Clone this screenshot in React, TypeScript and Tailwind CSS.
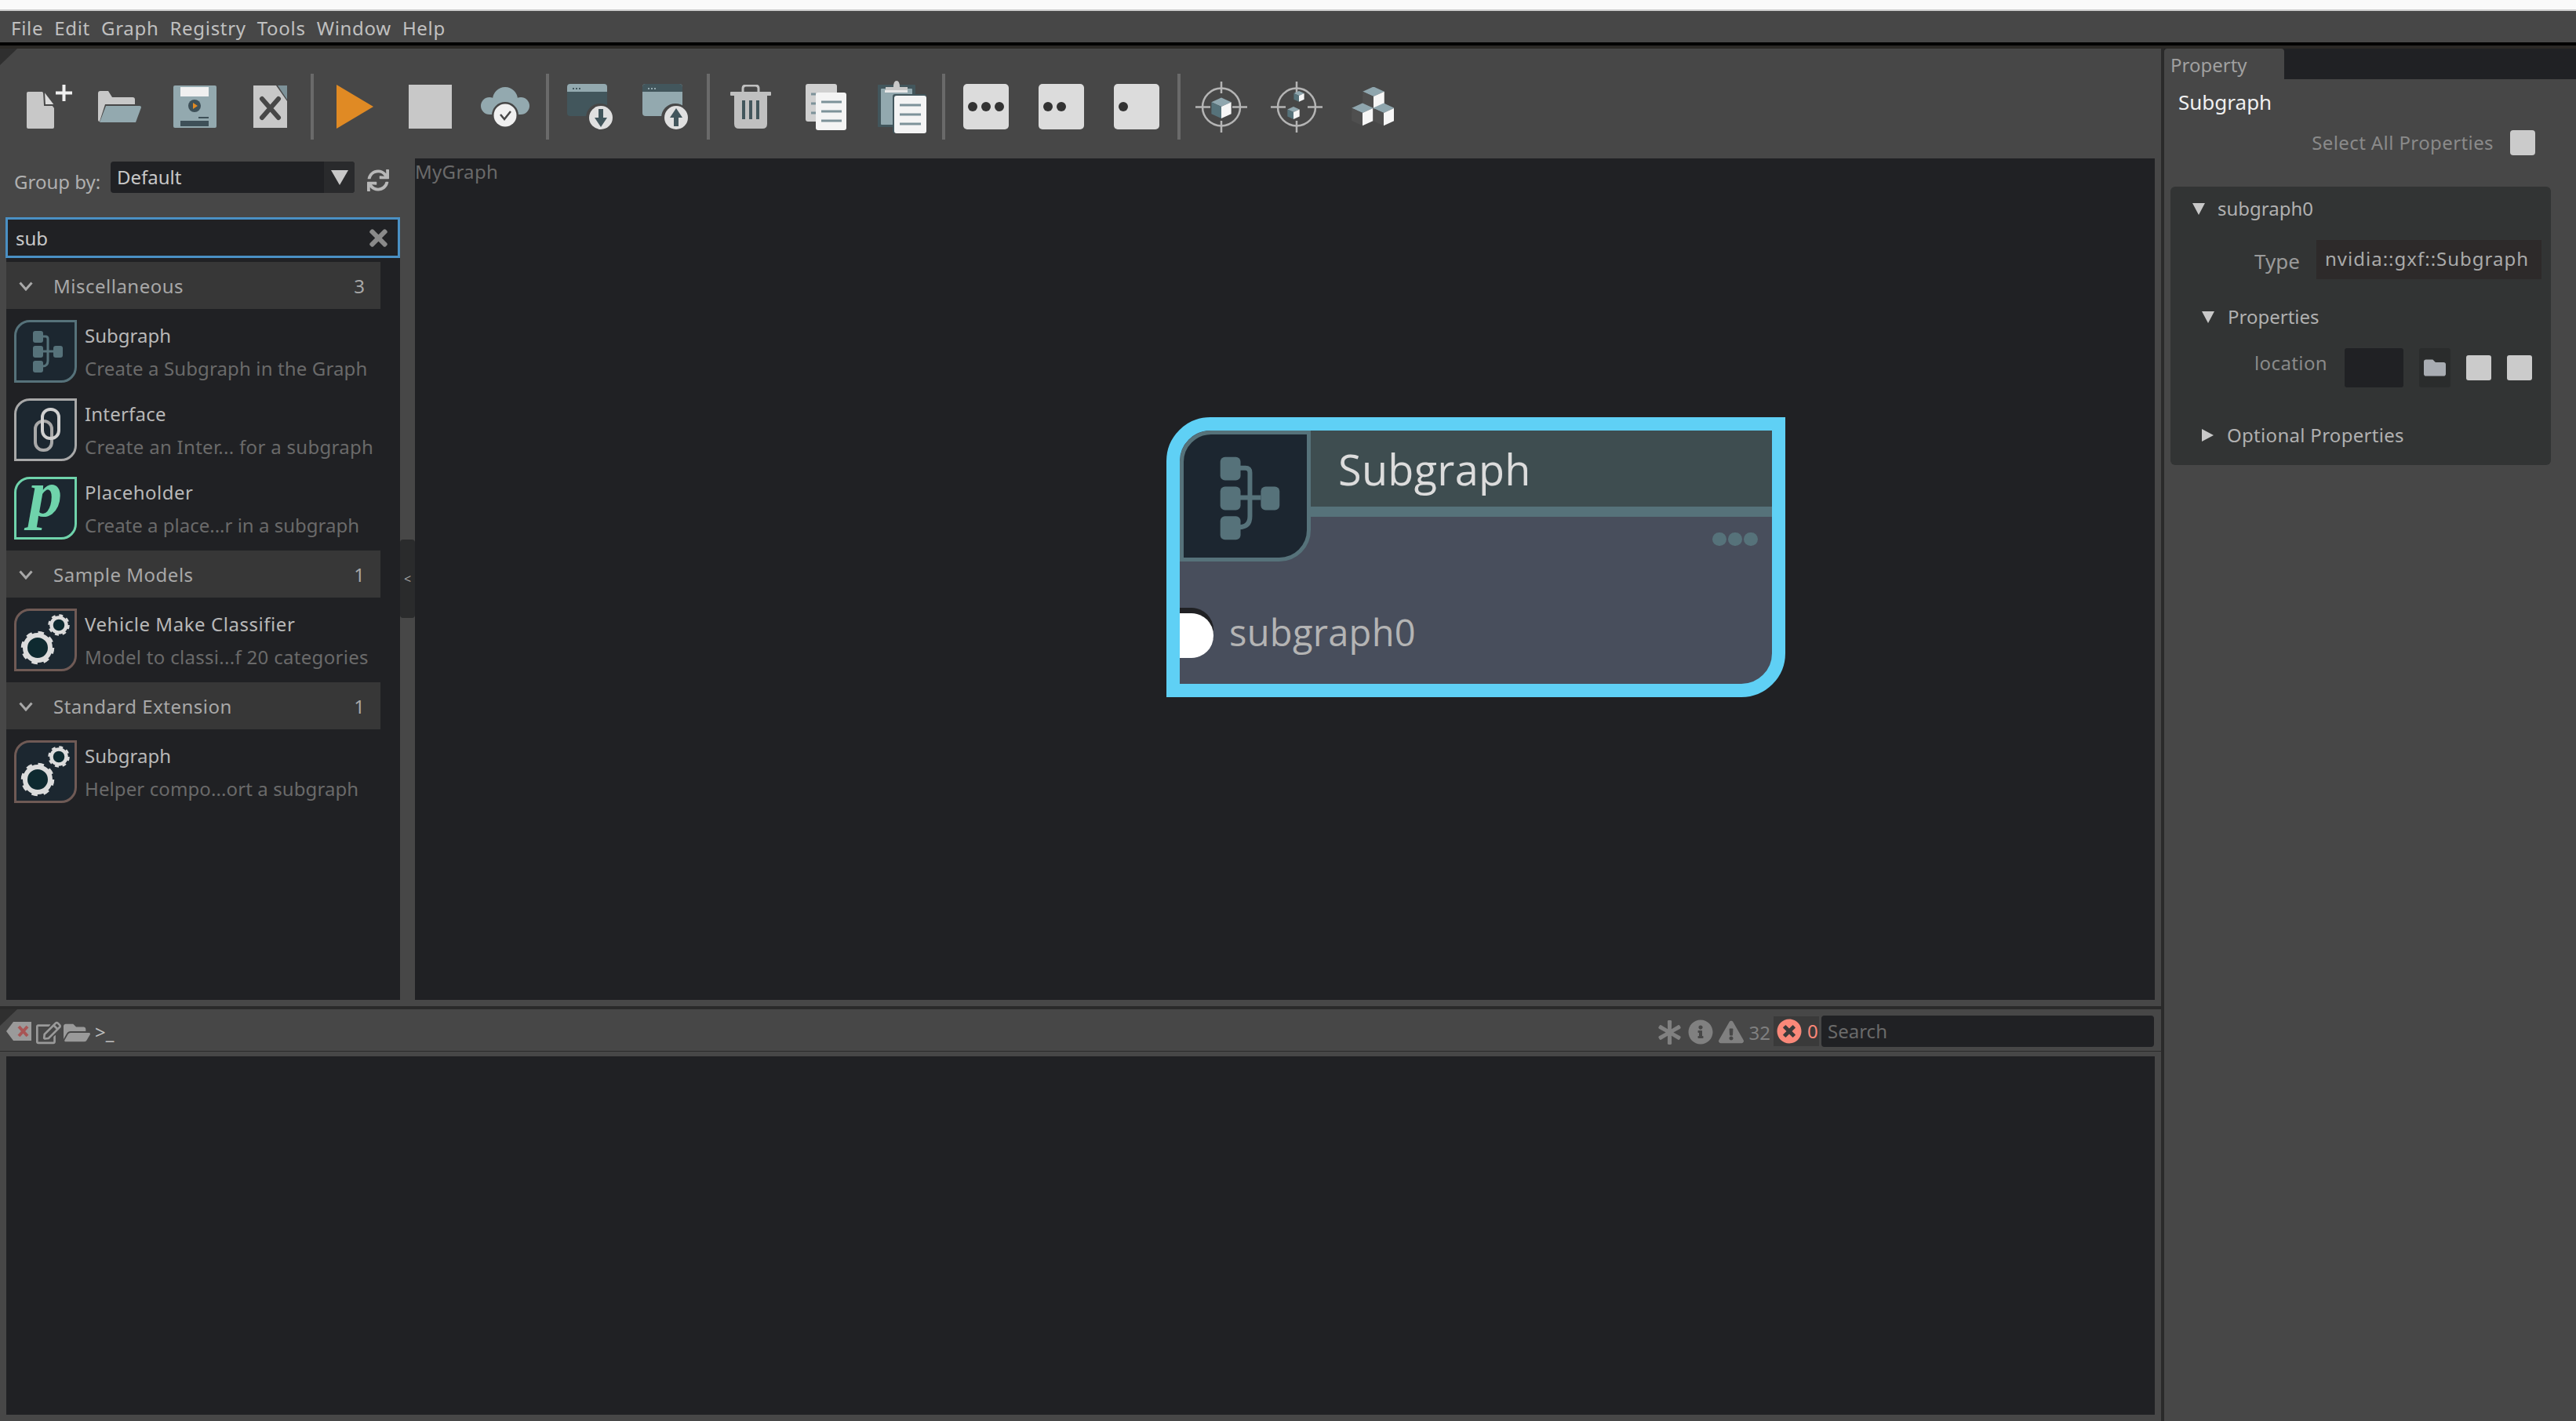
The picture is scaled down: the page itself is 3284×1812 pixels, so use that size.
import { FaSync, FaTimes, FaAsterisk, FaInfoCircle, FaExclamationTriangle, FaTimesCircle, FaRegEdit, FaFolderOpen, FaFolder } from 'react-icons/fa';

const MENUS = ['File', 'Edit', 'Graph', 'Registry', 'Tools', 'Window', 'Help'];

function NewIcon() {
  return (
    <svg width="58" height="56" viewBox="0 0 58 56" className="ml-[34px]">
      <path d="M0 11Q0 9 2 9H20L35 30V54Q35 56 33 56H2Q0 56 0 54Z" fill="#c8c8c8" />
      <path d="M22 9L23 26H35" fill="#dcdcdc" stroke="#474747" strokeWidth="2" />
      <path d="M37 10.5H58M47.5 0V21" stroke="#f0f0f0" strokeWidth="4" />
    </svg>
  );
}

function OpenIcon() {
  return (
    <svg width="55" height="40" viewBox="0 0 55 40" className="ml-[33px]">
      <path d="M0 3Q0 0 3 0H13L18 8H44Q47 8 47 11V17H9L2 39Q0 39 0 37Z" fill="#c8c8c8" />
      <path d="M10 19H53Q55 19 55 21L48 40H2Z" fill="#93a9af" />
    </svg>
  );
}

function SaveIcon() {
  return (
    <svg width="55" height="54" viewBox="0 0 55 54" className="ml-[41px]">
      <rect width="55" height="54" rx="2" fill="#93a9af" />
      <rect x="9" y="2" width="36" height="12" fill="#f0f0f0" />
      <ellipse cx="27" cy="26" rx="8" ry="8" fill="#3e5058" />
      <path d="M25 22V30L31 26Z" fill="#e08a24" />
      <rect x="32" y="40" width="13" height="2" fill="#3e5058" />
      <rect x="9" y="45" width="36" height="7" fill="#3e5058" />
    </svg>
  );
}

function CloseIcon() {
  return (
    <svg width="43" height="54" viewBox="0 0 43 54" className="ml-[47px]">
      <path d="M0 0H29L43 20V54H0Z" fill="#c8c8c8" />
      <path d="M31 0H43V18Z" fill="#7d9299" />
      <path d="M11 17L32 41M32 17L11 41" stroke="#474747" strokeWidth="6" strokeLinecap="round" />
    </svg>
  );
}

function Sep() {
  return <div className="h-[84px] w-[4px] bg-[#6a6a6a] self-center" />;
}

function CloudIcon() {
  return (
    <svg width="62" height="51" viewBox="0 0 62 51" className="ml-[37px]">
      <circle cx="31" cy="16" r="16" fill="#93a9af" />
      <circle cx="11" cy="24" r="11" fill="#93a9af" />
      <circle cx="51" cy="24" r="11" fill="#93a9af" />
      <rect x="11" y="20" width="40" height="15" fill="#93a9af" />
      <circle cx="31" cy="36" r="17" fill="#474747" />
      <circle cx="31" cy="36" r="14.5" fill="#f0f0f0" />
      <path d="M25 35L30 41L38 31" fill="none" stroke="#474747" strokeWidth="2.5" />
    </svg>
  );
}

function WindowIcon({ up, className }: { up?: boolean; className: string }) {
  const bar = up ? '#42565c' : '#93a9af';
  const body = up ? '#93a9af' : '#42565c';
  return (
    <svg width="59" height="58" viewBox="0 0 59 58" className={className}>
      <rect width="51" height="41" rx="4" fill={body} />
      <path d="M0 10V4Q0 0 4 0H47Q51 0 51 4V10Z" fill={bar} />
      <path d="M7 6H9M11 6H13M15 6H17" stroke={up ? '#93a9af' : '#42565c'} strokeWidth="2" />
      <circle cx="42" cy="43" r="18" fill="#474747" />
      <circle cx="43" cy="43" r="15" fill="#e0e0e0" />
      {up ? (
        <path d="M43 31L51 43H46V54H40V43H35Z" fill="#42565c" />
      ) : (
        <path d="M43 55L51 43H46V32H40V43H35Z" fill="#42565c" />
      )}
    </svg>
  );
}

function TrashIcon() {
  return (
    <svg width="52" height="56" viewBox="0 0 52 56" className="ml-[26px]">
      <path d="M16 10V5Q16 1 20 1H32Q36 1 36 5V10" fill="none" stroke="#c0c0c0" strokeWidth="3" />
      <rect x="0" y="9" width="52" height="5" rx="1" fill="#c0c0c0" />
      <path d="M5 14H47V50Q47 56 41 56H11Q5 56 5 50Z" fill="#c0c0c0" />
      <path d="M15 20H19V44H15ZM24 20H28V44H24ZM33 20H37V44H33Z" fill="#42565c" />
    </svg>
  );
}

function CopyIcon() {
  return (
    <svg width="52" height="59" viewBox="0 0 52 59" className="ml-[44px]">
      <rect width="40" height="48" rx="3" fill="#d0d0d0" />
      <path d="M7 13H13M7 25H13M7 37H13" stroke="#7d9299" strokeWidth="3" />
      <rect x="13" y="11" width="39" height="48" rx="3" fill="#f4f4f4" />
      <path d="M20 23H46M20 35H46M20 47H46" stroke="#7d9299" strokeWidth="3" />
    </svg>
  );
}

function PasteIcon() {
  return (
    <svg width="62" height="67" viewBox="0 0 62 67" className="ml-[40px]">
      <rect y="5" width="48" height="54" rx="1" fill="#42565c" />
      <rect x="4" y="10" width="40" height="46" rx="1" fill="#93a9af" />
      <path d="M10 15V8H20Q20 0 24 0Q28 0 28 8H38V15Z" fill="#c8c8c8" />
      <rect x="9" y="12" width="29" height="3" fill="#e8e8e8" />
      <rect x="19" y="17" width="43" height="50" rx="3" fill="#42565c" />
      <rect x="21" y="19" width="41" height="48" rx="3" fill="#f4f4f4" />
      <path d="M28 31H55M28 43H55M28 55H55" stroke="#7d9299" strokeWidth="3" />
    </svg>
  );
}

function DotsIcon({ n, className }: { n: number; className: string }) {
  return (
    <svg width="58" height="58" viewBox="0 0 58 58" className={className}>
      <rect width="58" height="58" rx="5" fill="#dcdcdc" />
      {[12, 29, 46].slice(0, n).map((cx) => (
        <circle key={cx} cx={cx} cy="29" r="6" fill="#333333" />
      ))}
    </svg>
  );
}

function Cube({ x, y, s, left = '#56727a' }: { x: number; y: number; s: number; left?: string }) {
  return (
    <g transform={`translate(${x} ${y}) scale(${s})`}>
      <path d="M0 -10L11 -5L0 0L-11 -5Z" fill="#8fa6ae" />
      <path d="M-11 -5L0 0V13L-11 8Z" fill={left} />
      <path d="M11 -5L0 0V13L11 8Z" fill="#f6f6f6" />
    </g>
  );
}

function TargetIcon({ children, className }: { children: React.ReactNode; className: string }) {
  return (
    <svg width="66" height="65" viewBox="0 0 66 65" className={className}>
      <circle cx="33" cy="32.5" r="24" fill="none" stroke="#b4b4b4" strokeWidth="2.5" />
      <path d="M0 32.5H19M47 32.5H66M33 0V15M33 50V65" stroke="#b4b4b4" strokeWidth="2.5" />
      {children}
    </svg>
  );
}

function BlocksIcon() {
  return (
    <svg width="54" height="50" viewBox="0 0 54 50" className="ml-[37px]">
      <Cube x={28} y={12} s={1.25} left="#4f4f4f" />
      <Cube x={14} y={33} s={1.25} left="#4f4f4f" />
      <Cube x={41} y={33} s={1.25} left="#4f4f4f" />
    </svg>
  );
}

function Toolbar() {
  return (
    <div className="relative flex h-[140px] items-center bg-[#474747] pt-[8px]">
      <div className="absolute left-0 top-0 h-0 w-0 border-t-[21px] border-r-[22px] border-t-[#2f2f2f] border-r-transparent" />
      <NewIcon />
      <OpenIcon />
      <SaveIcon />
      <CloseIcon />
      <div className="ml-[30px]"><Sep /></div>
      <svg width="47" height="56" viewBox="0 0 47 56" className="ml-[29px]"><path d="M0 0L47 28L0 56Z" fill="#e08a24" /></svg>
      <div className="ml-[45px] h-[56px] w-[55px] bg-[#c8c8c8]" />
      <CloudIcon />
      <div className="ml-[21px]"><Sep /></div>
      <WindowIcon className="ml-[23px]" />
      <WindowIcon up className="ml-[37px]" />
      <div className="ml-[23px]"><Sep /></div>
      <TrashIcon />
      <CopyIcon />
      <PasteIcon />
      <div className="ml-[20px]"><Sep /></div>
      <DotsIcon n={3} className="ml-[23px]" />
      <DotsIcon n={2} className="ml-[38px]" />
      <DotsIcon n={1} className="ml-[38px]" />
      <div className="ml-[23px]"><Sep /></div>
      <TargetIcon className="ml-[19px]">
        <Cube x={33} y={32} s={1.15} />
      </TargetIcon>
      <TargetIcon className="ml-[30px]">
        <Cube x={36} y={18} s={0.6} />
        <Cube x={29} y={39} s={0.7} />
      </TargetIcon>
      <BlocksIcon />
    </div>
  );
}

function SubgraphGlyph({ size, box = '0 0 80 80' }: { size: number; box?: string }) {
  return (
    <svg width={size} height={size} viewBox={box} className="block">
      <path d="M36 21H40Q43 21 43 24V52Q43 59 36 59M36 40H50" fill="none" stroke="#56727a" strokeWidth="3" />
      <rect x="24" y="14" width="13" height="15" rx="3" fill="#56727a" />
      <rect x="24" y="33" width="13" height="15" rx="3" fill="#56727a" />
      <rect x="24" y="52" width="13" height="15" rx="3" fill="#56727a" />
      <rect x="50" y="33" width="12" height="15" rx="3" fill="#56727a" />
    </svg>
  );
}

function ChainGlyph() {
  return (
    <svg width="74" height="74" viewBox="0 0 74 74" className="block">
      <rect x="24" y="26" width="21" height="37" rx="10" fill="none" stroke="#a8a8a8" strokeWidth="4" />
      <rect x="33" y="11" width="21" height="37" rx="10" fill="none" stroke="#d0d0d0" strokeWidth="4" />
    </svg>
  );
}

function GearsGlyph() {
  return (
    <svg width="74" height="74" viewBox="0 0 74 74" className="block">
      <circle cx="27" cy="47" r="16" fill="#0e2a30" stroke="#dcdcdc" strokeWidth="6" />
      <circle cx="27" cy="47" r="19.5" fill="none" stroke="#dcdcdc" strokeWidth="3.5" strokeDasharray="7.5 7.8" />
      <circle cx="54" cy="18" r="9.5" fill="#0e2a30" stroke="#dcdcdc" strokeWidth="4.5" />
      <circle cx="54" cy="18" r="12.5" fill="none" stroke="#dcdcdc" strokeWidth="2.5" strokeDasharray="5 4.8" />
    </svg>
  );
}

function Item({ glyph, border, title, desc, titleCls = '', descCls = '' }: { glyph: React.ReactNode; border: string; title: string; desc: string; titleCls?: string; descCls?: string }) {
  return (
    <div className="flex h-[80px]">
      <div className={`ml-[10px] h-[80px] w-[80px] shrink-0 rounded-tl-[20px] rounded-br-[20px] border-[3px] bg-[#1c2730] ${border}`}>
        {glyph}
      </div>
      <div className="ml-[10px] flex flex-col whitespace-nowrap text-[24px]">
        <div className={`h-[42px] leading-[40px] text-[#b8b8b8] ${titleCls}`}>{title}</div>
        <div className={`h-[38px] leading-[40px] text-[#6a6a6a] ${descCls}`}>{desc}</div>
      </div>
    </div>
  );
}

function Section({ name, count, children }: { name: string; count: number; children: React.ReactNode }) {
  return (
    <>
      <div className="flex h-[60px] w-[477px] items-center bg-[#373737] pt-[1px] text-[24px] text-[#a8a8a8]">
        <svg width="18" height="12" viewBox="0 0 18 12" className="ml-[16px]">
          <path d="M1.5 1.5L9 10L16.5 1.5" fill="none" stroke="#a8a8a8" strokeWidth="3" />
        </svg>
        <span className="ml-[26px] flex-1 tracking-[0.5px]">{name}</span>
        <span className="mr-[20px]">{count}</span>
      </div>
      <div className="flex flex-col gap-[20px] py-[14px]">{children}</div>
    </>
  );
}

function LeftPanel() {
  return (
    <div className="flex w-[529px] shrink-0 flex-col">
      <div className="flex h-[75px] items-start">
        <span className="ml-[18px] mt-[13px] w-[113px] whitespace-nowrap text-[24px] leading-[34px] text-[#b0b0b0]">Group by:</span>
        <div className="ml-[10px] mt-[4px] flex h-[40px] w-[311px] items-center overflow-hidden rounded-[4px] bg-[#202124]">
          <span className="ml-[8px] flex-1 text-[24px] text-[#c8c8c8]">Default</span>
          <div className="flex h-full w-[39px] items-center justify-center bg-[#292a2c]">
            <div className="h-0 w-0 border-x-[11px] border-t-[19px] border-x-transparent border-t-[#c8c8c8]" />
          </div>
        </div>
        <FaSync className="ml-[16px] mt-[14px] text-[28px] text-[#b8b8b8]" />
      </div>
      <div className="ml-[7px] flex h-[52px] w-[503px] items-center border-[3px] border-[#4a90c4] bg-[#202124] pt-[1px]">
        <span className="ml-[10px] flex-1 text-[24px] text-[#c8c8c8]">sub</span>
        <FaTimes className="mr-[8px] text-[33px] text-[#8a8a8a]" />
      </div>
      <div className="flex flex-1">
        <div className="ml-[8px] w-[502px] bg-[#202124] pt-[5px]">
          <Section name="Miscellaneous" count={3}>
            <Item glyph={<div className="-m-[3px]"><SubgraphGlyph size={80} /></div>} border="border-[#56727a]" title="Subgraph" desc="Create a Subgraph in the Graph" descCls="tracking-[0.13px]" />
            <Item glyph={<ChainGlyph />} border="border-[#a8a8a8]" title="Interface" desc="Create an Inter... for a subgraph" titleCls="tracking-[0.2px]" descCls="tracking-[0.3px]" />
            <Item
              glyph={
                <div className="flex h-[74px] items-center justify-center pb-[38px] font-['Liberation_Serif',serif] text-[85px] leading-[85px] font-bold italic text-[#6fd3ab]">
                  <span>p</span>
                </div>
              }
              border="border-[#6fd3ab]"
              title="Placeholder"
              desc="Create a place...r in a subgraph"
              titleCls="tracking-[0.5px]"
            />
          </Section>
          <Section name="Sample Models" count={1}>
            <Item glyph={<GearsGlyph />} border="border-[#6f5a55]" title="Vehicle Make Classifier" desc="Model to classi...f 20 categories" titleCls="tracking-[0.55px]" descCls="tracking-[0.3px]" />
          </Section>
          <Section name="Standard Extension" count={1}>
            <Item glyph={<GearsGlyph />} border="border-[#6f5a55]" title="Subgraph" desc="Helper compo...ort a subgraph" descCls="tracking-[0.1px]" />
          </Section>
        </div>
        <div className="w-[19px]">
          <div className="mt-[359px] flex h-[100px] items-center justify-center rounded-t-[4px] rounded-b-[4px] bg-[#2a2b2c] text-[16px] text-[#a0a0a0]">
            &lt;
          </div>
        </div>
      </div>
    </div>
  );
}

function GraphNode() {
  return (
    <div className="absolute left-[958px] top-[330px] h-[357px] w-[789px] overflow-hidden rounded-tl-[56px] rounded-br-[56px] border-[17px] border-[#5fd0f5] bg-[#484e5c] font-['Open_Sans',sans-serif]">
      <div className="relative flex">
        <div className="relative z-10 h-[167px] w-[167px] shrink-0 overflow-hidden rounded-tl-[40px] rounded-br-[40px] border-[5px] border-[#56727a] bg-[#1c2630]">
          <div className="-m-[5px]">
            <SubgraphGlyph size={167} box="-2 -3 84 84" />
          </div>
        </div>
        <div className="flex h-[110px] flex-1 flex-col">
          <div className="flex h-[97px] items-center bg-[#3e4d50] pl-[35px] text-[54px] text-[#dcdcdc]">Subgraph</div>
          <div className="h-[13px] bg-[#56727a]" />
        </div>
      </div>
      <div className="absolute left-[679px] top-[130px] flex gap-[2px]">
        <div className="h-[17px] w-[18px] rounded-full bg-[#56727a]" />
        <div className="h-[17px] w-[18px] rounded-full bg-[#56727a]" />
        <div className="h-[17px] w-[18px] rounded-full bg-[#56727a]" />
      </div>
      <div className="absolute left-0 top-[226px] h-[40px] w-[43px] rounded-tr-[28px] bg-[#202124]" />
      <div className="absolute left-0 top-[233px] h-[57px] w-[43px] rounded-r-[28px] bg-white" />
      <div className="absolute left-[63px] top-[224px] text-[47px] leading-[66px] text-[#b4b4b4]">subgraph0</div>
    </div>
  );
}

function ConsoleBar() {
  return (
    <div className="relative flex h-[60px] items-start bg-[#474747]">
      <div className="absolute left-0 top-0 h-0 w-0 border-t-[21px] border-r-[22px] border-t-[#2f2f2f] border-r-transparent" />
      <svg width="32" height="24" viewBox="0 0 32 24" className="ml-[8px] mt-[16px]">
        <path d="M0 12L9 0H32V24H9Z" fill="#9a9a9a" />
        <path d="M16 6L27 18M27 6L16 18" stroke="#a85555" strokeWidth="4" />
      </svg>
      <FaRegEdit className="ml-[6px] mt-[14px] text-[32px] text-[#9a9a9a]" />
      <FaFolderOpen className="ml-[3px] mt-[13px] text-[34px] text-[#9a9a9a]" />
      <span className="ml-[6px] mt-[14px] text-[24px] leading-[30px] text-[#c0c0c0]">&gt;_</span>
      <div className="flex-1" />
      <FaAsterisk className="mt-[14px] text-[31px] text-[#808080]" />
      <FaInfoCircle className="ml-[8px] mt-[13px] text-[32px] text-[#808080]" />
      <FaExclamationTriangle className="ml-[7px] mt-[13px] text-[32px] text-[#808080]" />
      <span className="ml-[7px] mt-[13px] text-[24px] leading-[34px] text-[#808080]">32</span>
      <div className="ml-[4px] mt-[9px] flex h-[38px] w-[58px] items-center bg-[#3a3a3a]">
        <FaTimesCircle className="ml-[4px] text-[32px] text-[#f98879]" />
        <span className="ml-[7px] text-[24px] text-[#f98879]">0</span>
      </div>
      <div className="ml-[3px] mr-[9px] mt-[8px] flex h-[40px] w-[424px] items-center rounded-[4px] bg-[#202124] pl-[8px] text-[24px] text-[#6a6a6a]">
        Search
      </div>
      <div className="absolute bottom-[6px] left-0 h-[1px] w-[2755px] bg-[#2a2a2a]" />
    </div>
  );
}

function PropertyPanel() {
  return (
    <div className="flex w-[525px] shrink-0 flex-col bg-[#474747]">
      <div className="flex h-[39px] bg-[#202124]">
        <div className="w-[153px] rounded-t-[4px] bg-[#474747] pl-[8px] text-[24px] leading-[42px] text-[#a0a0a0]">Property</div>
      </div>
      <div className="pl-[18px] pt-[9px] text-[26px] leading-[40px] text-[#f0f0f0]">Subgraph</div>
      <div className="mt-[16px] flex h-[32px] items-center justify-end pr-[52px]">
        <span className="text-[24px] tracking-[0.4px] text-[#8a8a8a]">Select All Properties</span>
        <div className="ml-[21px] h-[32px] w-[32px] rounded-[4px] bg-[#cbcbcb]" />
      </div>
      <div className="relative ml-[8px] mt-[40px] h-[355px] w-[485px] rounded-[6px] bg-[#323434] text-[24px]">
        <div className="flex items-center pl-[28px] pt-[12px] text-[#b0b0b0]">
          <div className="h-0 w-0 border-x-[8px] border-t-[15px] border-x-transparent border-t-[#c8c8c8]" />
          <span className="ml-[16px] leading-[32px]">subgraph0</span>
        </div>
        <div className="mt-[22px] flex items-center">
          <span className="ml-[107px] mt-[4px] w-[58px] text-[26px] leading-[50px] text-[#9a9a9a]">Type</span>
          <div className="ml-[21px] flex h-[50px] w-[287px] items-center whitespace-nowrap bg-[#2d2a2a] pb-[2px] pl-[11px] tracking-[1px] text-[#aaaaaa]">nvidia::gxf::Subgraph</div>
        </div>
        <div className="mt-[30px] flex items-center pl-[40px] text-[#b0b0b0]">
          <div className="h-0 w-0 border-x-[8px] border-t-[15px] border-x-transparent border-t-[#c8c8c8]" />
          <span className="ml-[17px] leading-[32px]">Properties</span>
        </div>
        <div className="mt-[24px] flex h-[50px] items-center">
          <span className="ml-[107px] -mt-[12px] w-[93px] tracking-[0.4px] text-[#8a8a8a]">location</span>
          <div className="ml-[22px] h-[50px] w-[75px] rounded-[3px] bg-[#202124]" />
          <div className="ml-[20px] flex h-[50px] w-[40px] items-center justify-center rounded-[3px] bg-[#2a2c2c]">
            <FaFolder className="text-[28px] text-[#a8acb2]" />
          </div>
          <div className="ml-[20px] h-[32px] w-[32px] rounded-[3px] bg-[#cbcbcb]" />
          <div className="ml-[20px] h-[32px] w-[32px] rounded-[3px] bg-[#cbcbcb]" />
        </div>
        <div className="mt-[45px] flex items-center pl-[40px] text-[#b0b0b0]">
          <div className="h-0 w-0 border-y-[8px] border-l-[15px] border-y-transparent border-l-[#c8c8c8]" />
          <span className="ml-[17px] leading-[32px] tracking-[0.3px]">Optional Properties</span>
        </div>
      </div>
    </div>
  );
}

export default function App() {
  return (
    <div className="flex h-[1812px] w-[3284px] flex-col overflow-hidden bg-[#474747] font-['Noto_Sans',sans-serif]">
      <div className="h-[12px] bg-[#fafafa]" />
      <div className="h-[2px] bg-[#cccccc]" />
      <div className="flex h-[40px] items-center gap-[14px] bg-[#474747] pl-[14px] pt-[3px] text-[24px] tracking-[0.7px] text-[#c0c0c0]">
        {MENUS.map((m) => (
          <span key={m}>{m}</span>
        ))}
      </div>
      <div className="h-[4px] bg-black" />
      <div className="h-[4px] bg-[#2b2926]" />
      <div className="flex min-h-0 flex-1">
        <div className="flex w-[2755px] shrink-0 flex-col">
          <Toolbar />
          <div className="flex h-[1073px]">
            <LeftPanel />
            <div className="relative w-[2218px] shrink-0 bg-[#202124] text-[24px] leading-[34px] tracking-[0.3px] text-[#6a6a6a]">
              MyGraph
              <GraphNode />
            </div>
          </div>
          <div className="h-[8px]" />
          <div className="h-[4px] bg-[#2a2a2a]" />
          <ConsoleBar />
          <div className="ml-[8px] h-[457px] w-[2739px] bg-[#202124]" />
        </div>
        <div className="w-[4px] shrink-0 bg-[#2a2a2a]" />
        <PropertyPanel />
      </div>
    </div>
  );
}
